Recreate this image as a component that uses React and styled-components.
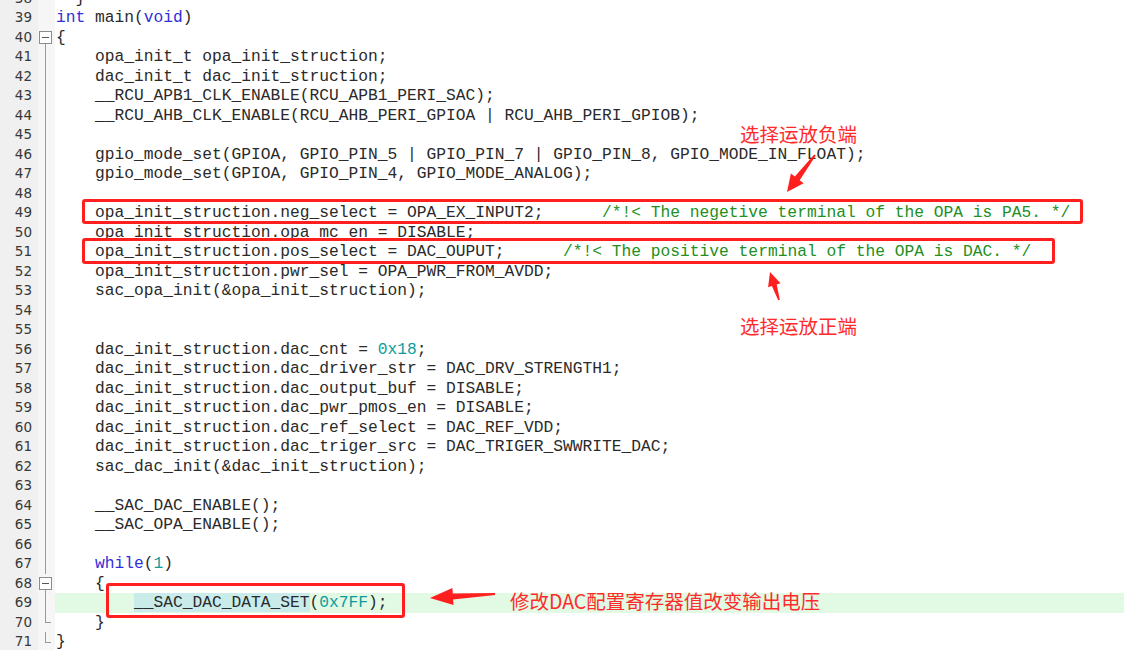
// Libraries
import React from "react";
import styled, { createGlobalStyle, css } from "styled-components";

const GlobalStyle = createGlobalStyle`
  html, body {
    margin: 0;
    padding: 0;
    background: #ffffff;
  }
  #root {
    width: 1124px;
    height: 650px;
    overflow: hidden;
  }
`;

const ROW = 19.5;

// source lines: [number, foldKind, tokens, highlighted]
const lines = [
  [38, "none", [["  }"]]],
  [39, "none", [["int", "k"], [" main("], ["void", "k"], [")"]]],
  [40, "open", [["{"]]],
  [41, "line", [["    opa_init_t opa_init_struction;"]]],
  [42, "line", [["    dac_init_t dac_init_struction;"]]],
  [43, "line", [["    __RCU_APB1_CLK_ENABLE(RCU_APB1_PERI_SAC);"]]],
  [44, "line", [["    __RCU_AHB_CLK_ENABLE(RCU_AHB_PERI_GPIOA | RCU_AHB_PERI_GPIOB);"]]],
  [45, "line", []],
  [46, "line", [["    gpio_mode_set(GPIOA, GPIO_PIN_5 | GPIO_PIN_7 | GPIO_PIN_8, GPIO_MODE_IN_FLOAT);"]]],
  [47, "line", [["    gpio_mode_set(GPIOA, GPIO_PIN_4, GPIO_MODE_ANALOG);"]]],
  [48, "line", []],
  [49, "line", [["    opa_init_struction.neg_select = OPA_EX_INPUT2;      "], ["/*!< The negetive terminal of the OPA is PA5. */", "c"]]],
  [50, "line", [["    opa_init_struction.opa_mc_en = DISABLE;"]]],
  [51, "line", [["    opa_init_struction.pos_select = DAC_OUPUT;      "], ["/*!< The positive terminal of the OPA is DAC. */", "c"]]],
  [52, "line", [["    opa_init_struction.pwr_sel = OPA_PWR_FROM_AVDD;"]]],
  [53, "line", [["    sac_opa_init(&opa_init_struction);"]]],
  [54, "line", []],
  [55, "line", []],
  [56, "line", [["    dac_init_struction.dac_cnt = "], ["0x18", "n"], [";"]]],
  [57, "line", [["    dac_init_struction.dac_driver_str = DAC_DRV_STRENGTH1;"]]],
  [58, "line", [["    dac_init_struction.dac_output_buf = DISABLE;"]]],
  [59, "line", [["    dac_init_struction.dac_pwr_pmos_en = DISABLE;"]]],
  [60, "line", [["    dac_init_struction.dac_ref_select = DAC_REF_VDD;"]]],
  [61, "line", [["    dac_init_struction.dac_triger_src = DAC_TRIGER_SWWRITE_DAC;"]]],
  [62, "line", [["    sac_dac_init(&dac_init_struction);"]]],
  [63, "line", []],
  [64, "line", [["    __SAC_DAC_ENABLE();"]]],
  [65, "line", [["    __SAC_OPA_ENABLE();"]]],
  [66, "line", []],
  [67, "line", [["    "], ["while", "k"], ["("], ["1", "n"], [")"]]],
  [68, "open", [["    {"]]],
  [69, "line", [["        "], ["__SAC_DAC_DATA_SET", "h"], ["("], ["0x7FF", "n"], [");"]], true],
  [70, "end", [["    }"]]],
  [71, "end", [["}"]]],
];

const Page = styled.div`
  position: relative;
  width: 1124px;
  height: 650px;
  overflow: hidden;
  background: #ffffff;
`;

const Editor = styled.div`
  display: flex;
  flex-direction: column;
  margin-top: -11.5px;
`;

const Row = styled.div`
  display: grid;
  grid-template-columns: 38px 17px 1fr;
  height: ${ROW}px;
`;

const Num = styled.div`
  background: #f0f0f0;
  color: #383838;
  font-family: "DejaVu Sans", Verdana, sans-serif;
  font-size: 13.5px;
  line-height: ${ROW}px;
  text-align: right;
  padding-right: 6px;
`;

const Fold = styled.div`
  position: relative;
  background: #f6f6f6;

  ${(p) =>
    (p.$kind === "line" || p.$kind === "open" || p.$kind === "end") &&
    css`
      &::before {
        content: "";
        position: absolute;
        left: 7px;
        width: 1px;
        top: ${p.$kind === "open" ? "50%" : "0"};
        height: ${p.$kind === "end" ? "50%" : "100%"};
        background: #9a9a9a;
      }
    `}

  ${(p) =>
    p.$kind === "end" &&
    css`
      &::after {
        content: "";
        position: absolute;
        left: 7px;
        top: 50%;
        width: 6px;
        height: 1px;
        background: #9a9a9a;
      }
    `}
`;

const FoldBox = styled.span`
  position: absolute;
  left: 1px;
  top: 3.5px;
  width: 11px;
  height: 11px;
  border: 1px solid #8c8c8c;
  background: #ffffff;
  z-index: 1;

  &::after {
    content: "";
    position: absolute;
    left: 2px;
    right: 2px;
    top: 5px;
    height: 1px;
    background: #555555;
  }
`;

const Code = styled.div`
  background: ${(p) => (p.$active ? "#e2fae4" : "#ffffff")};
  font-family: "Liberation Mono", "Courier New", monospace;
  font-size: 16.25px;
  line-height: ${ROW}px;
  white-space: pre;
  color: #2a2a2a;
  padding-left: 1px;
`;

const tokenColors = {
  k: "#3030d8",
  n: "#0b9c9c",
  c: "#228f22",
};

const Token = styled.span`
  color: ${(p) => tokenColors[p.$kind] || "inherit"};
  background: ${(p) => (p.$kind === "h" ? "#c9ecea" : "transparent")};
`;

const Overlay = styled.div`
  position: absolute;
  inset: 0;
  pointer-events: none;
`;

const MarkBox = styled.div`
  position: absolute;
  left: ${(p) => p.$x}px;
  top: ${(p) => p.$y}px;
  width: ${(p) => p.$w}px;
  height: ${(p) => p.$h}px;
  box-sizing: border-box;
  border: 3px solid #ff1f1f;
  border-radius: 3px;
`;

const Note = styled.div`
  position: absolute;
  left: ${(p) => p.$x}px;
  top: ${(p) => p.$y}px;
  color: #ff2b2b;
  font-family: "Noto Sans CJK SC", "Noto Sans", sans-serif;
  font-size: 19.5px;
  line-height: 22px;
  white-space: nowrap;
`;

const Arrows = styled.svg`
  position: absolute;
  left: 0;
  top: 0;
`;

// tapered arrow from tail (x1,y1) to tip (x2,y2)
const arrowPoints = (x1, y1, x2, y2, headLen, headW, shaftW, tailW) => {
  const dx = x2 - x1;
  const dy = y2 - y1;
  const len = Math.hypot(dx, dy);
  const ux = dx / len;
  const uy = dy / len;
  const px = -uy;
  const py = ux;
  const bx = x2 - ux * headLen;
  const by = y2 - uy * headLen;
  const pts = [
    [x2, y2],
    [bx + px * headW, by + py * headW],
    [bx + px * shaftW, by + py * shaftW],
    [x1 + px * tailW, y1 + py * tailW],
    [x1 - px * tailW, y1 - py * tailW],
    [bx - px * shaftW, by - py * shaftW],
    [bx - px * headW, by - py * headW],
  ];
  return pts.map((q) => q.map((v) => v.toFixed(1)).join(",")).join(" ");
};

const CodeLine = ({ num, fold, tokens, active }) => (
  <Row>
    <Num>{num}</Num>
    <Fold $kind={fold}>{fold === "open" && <FoldBox />}</Fold>
    <Code $active={active}>
      {tokens.length === 0
        ? " "
        : tokens.map(([text, kind], i) => (
            <Token key={i} $kind={kind}>
              {text}
            </Token>
          ))}
    </Code>
  </Row>
);

const App = () => {
  return (
    <>
      <GlobalStyle />
      <Page>
        <Editor>
          {lines.map(([num, fold, tokens, active]) => (
            <CodeLine
              key={num}
              num={num}
              fold={fold}
              tokens={tokens}
              active={active}
            />
          ))}
        </Editor>
        <Overlay>
          <MarkBox $x={82} $y={199} $w={1001} $h={25} />
          <MarkBox $x={82} $y={238} $w={973} $h={26} />
          <MarkBox $x={106} $y={583} $w={299} $h={35} />
          <Note $x={740} $y={123}>选择运放负端</Note>
          <Note $x={740} $y={315}>选择运放正端</Note>
          <Note $x={510} $y={590}>修改DAC配置寄存器值改变输出电压</Note>
          <Arrows width="1124" height="650" viewBox="0 0 1124 650">
            <g fill="#ff1f1f">
              <polygon points={arrowPoints(815, 155, 787, 192, 17, 8, 3, 1)} />
              <polygon points={arrowPoints(779, 300, 770, 272, 14, 6.5, 2.5, 0.8)} />
              <polygon points={arrowPoints(495, 594, 430, 598, 23, 8.5, 3, 1)} />
            </g>
          </Arrows>
        </Overlay>
      </Page>
    </>
  );
};

export default App;
